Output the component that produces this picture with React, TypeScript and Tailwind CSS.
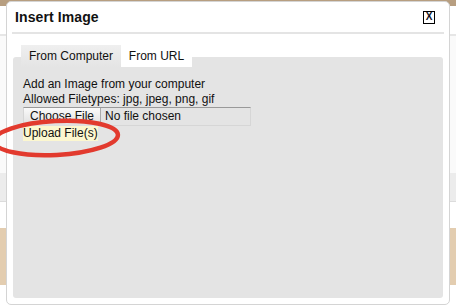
import React from "react";

const font = { fontFamily: '"Liberation Sans", Arial, sans-serif' };

// page behind the modal, only the edges show
const PageBehind = () => (
  <div className="flex flex-col w-[456px] h-[307px] bg-white">
    <div className="h-[6px] bg-[#b79e80]" />
    <div className="h-[28px] bg-white" />
    <div className="h-[2px] bg-[#e6e6e6]" />
    <div className="h-[137px] bg-[#fafafa]" />
    <div className="h-[28px] bg-[#ececec]" />
    <div className="h-[1px] bg-[#dcdcdc]" />
    <div className="h-[26px] bg-white" />
    <div className="h-[57px] bg-[#e3cdb0]" />
    <div className="flex-1 bg-white" />
  </div>
);

export default function App() {
  return (
    <div className="relative w-[456px] h-[307px] overflow-hidden" style={font}>
      <PageBehind />

      {/* Insert Image dialog */}
      <div className="absolute left-[6px] top-[1px] w-[444px] h-[304px] bg-white border border-[#d4d4d4] rounded-[5px] px-[5px] flex flex-col">
        <div className="flex items-center justify-between h-[32px] border-b-2 border-[#e4e4e4] pl-[3px] pr-[9px]">
          <span className="text-[14px] font-bold text-[#111] tracking-[0.1px]">Insert Image</span>
          <button className="w-[12px] h-[13px] border border-black flex items-center justify-center text-[10px] font-bold leading-none text-[#112]">
            X
          </button>
        </div>

        <div className="flex flex-col pt-[11px] pb-[6px] flex-1">
          {/* tabs */}
          <div className="flex pl-[9px] h-[12px] relative z-10">
            <div className="h-[22px] w-[100px] bg-gradient-to-b from-[#efefef] to-[#e4e4e4] text-[12px] text-[#111] flex items-center justify-center">
              From Computer
            </div>
            <div className="h-[22px] w-[71px] bg-white text-[12px] text-[#111] flex items-center justify-center">
              From URL
            </div>
          </div>

          {/* tab panel */}
          <div className="flex-1 ml-[1px] mr-[1px] bg-[#e4e4e4] rounded-[3px] pt-[20px] pl-[10px] text-[12px] leading-[15px] text-[#111]">
            <p>Add an Image from your computer</p>
            <p>Allowed Filetypes: jpg, jpeg, png, gif</p>
            <div className="flex items-center w-[228px] h-[19px] border border-[#d6d6d6] border-t-[#999]">
              <span className="h-[18px] w-[77px] flex items-center justify-center bg-gradient-to-b from-[#fafafa] to-[#dedede] border-r border-[#aaa]">
                Choose File
              </span>
              <span className="pl-[4px]">No file chosen</span>
            </div>
            <span className="inline-block bg-[#fcf7cf] leading-[15px]">Upload File(s)</span>
          </div>
        </div>
      </div>

      {/* red marker circle */}
      <svg className="absolute left-0 top-0 pointer-events-none" width="456" height="307">
        <ellipse cx="56" cy="138" rx="62" ry="17" transform="rotate(-3 56 138)" fill="none" stroke="#e23a2e" strokeWidth="4.5" />
      </svg>
    </div>
  );
}
